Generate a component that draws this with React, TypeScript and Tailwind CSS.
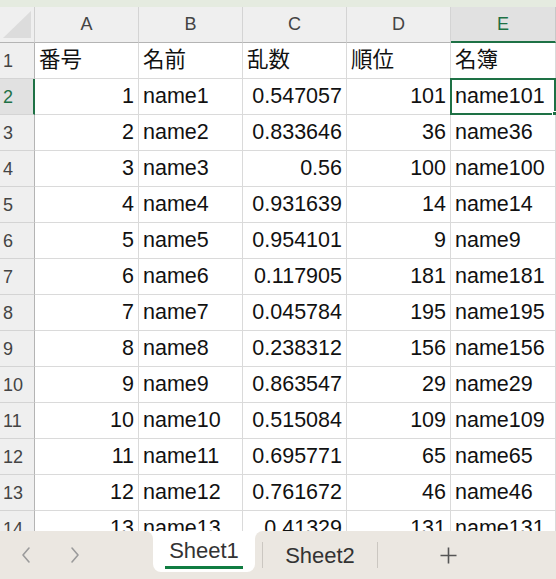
import { ReactNode } from "react";

type Row = {
  no: number;
  name: string;
  rand: string;
  rank: number;
  list: string;
};

const rows: Row[] = [
  { no: 1, name: "name1", rand: "0.547057", rank: 101, list: "name101" },
  { no: 2, name: "name2", rand: "0.833646", rank: 36, list: "name36" },
  { no: 3, name: "name3", rand: "0.56", rank: 100, list: "name100" },
  { no: 4, name: "name4", rand: "0.931639", rank: 14, list: "name14" },
  { no: 5, name: "name5", rand: "0.954101", rank: 9, list: "name9" },
  { no: 6, name: "name6", rand: "0.117905", rank: 181, list: "name181" },
  { no: 7, name: "name7", rand: "0.045784", rank: 195, list: "name195" },
  { no: 8, name: "name8", rand: "0.238312", rank: 156, list: "name156" },
  { no: 9, name: "name9", rand: "0.863547", rank: 29, list: "name29" },
  { no: 10, name: "name10", rand: "0.515084", rank: 109, list: "name109" },
  { no: 11, name: "name11", rand: "0.695771", rank: 65, list: "name65" },
  { no: 12, name: "name12", rand: "0.761672", rank: 46, list: "name46" },
  { no: 13, name: "name13", rand: "0.41329", rank: 131, list: "name131" },
];

const cols = ["A", "B", "C", "D", "E"];

const gridCols = "grid grid-cols-[35px_104px_104px_104px_104px_105px]";

const Cell = ({
  children,
  right,
  selected,
}: {
  children?: ReactNode;
  right?: boolean;
  selected?: boolean;
}) => (
  <div
    className={`relative flex h-[36px] items-center border-r border-b border-[#dadada] bg-white text-[21.5px] leading-none whitespace-nowrap text-[#111] ${
      right ? "justify-end pr-[4px]" : "pl-[4px]"
    }`}
  >
    {children}
    {selected && (
      <>
        <div className="absolute -top-px -left-px -right-px -bottom-px border-2 border-[#1e7145]" />
        <div className="absolute -right-[4px] -bottom-[4px] h-[7px] w-[7px] border border-white bg-[#1e7145]" />
      </>
    )}
  </div>
);

const RowHead = ({ n, active }: { n: number; active?: boolean }) => (
  <div
    className={`flex h-[36px] items-center border-b border-[#d4d4d4] pl-[3px] text-[18px] leading-none ${
      active
        ? "border-r-2 border-r-[#1e7145] bg-[#e1e1e1] text-[#1e7145]"
        : "border-r border-r-[#b4b4b4] bg-[#efefef] text-[#444]"
    }`}
  >
    {n}
  </div>
);

const Chevron = ({ dir }: { dir: "left" | "right" }) => (
  <svg width="12" height="18" viewBox="0 0 12 18" fill="none">
    <polyline
      points={dir === "left" ? "9,2 3,9 9,16" : "3,2 9,9 3,16"}
      stroke="#9b9b9b"
      strokeWidth="1.6"
      strokeLinecap="round"
      strokeLinejoin="round"
    />
  </svg>
);

export default function App() {
  return (
    <div
      className="flex h-[579px] w-[556px] flex-col overflow-hidden bg-white"
      style={{ fontFamily: '"Liberation Sans", "Noto Sans CJK JP", sans-serif' }}
    >
      <div className="h-[7px] shrink-0 bg-[#e5ebe0]" />

      <div className="flex-1 overflow-hidden">
        <div className={gridCols}>
          <div className="relative h-[36px] border-r border-b border-r-[#d0d0d0] border-b-[#b4b4b4] bg-[#efefef]">
            <svg className="absolute left-0 top-0" width="34" height="35" viewBox="0 0 34 35">
              <polygon points="3,31 31,31 31,4" fill="#dcdcdc" />
            </svg>
          </div>
          {cols.map((c) =>
            c === "E" ? (
              <div
                key={c}
                className="flex h-[36px] items-center justify-center border-r border-r-[#c8c8c8] border-b-2 border-b-[#1e7145] bg-[#e1e1e1] text-[18px] text-[#1e7145]"
              >
                {c}
              </div>
            ) : (
              <div
                key={c}
                className="flex h-[36px] items-center justify-center border-r border-b border-r-[#d4d4d4] border-b-[#b4b4b4] bg-[#efefef] text-[18px] text-[#444]"
              >
                {c}
              </div>
            )
          )}

          <RowHead n={1} />
          <Cell>番号</Cell>
          <Cell>名前</Cell>
          <Cell>乱数</Cell>
          <Cell>順位</Cell>
          <Cell>名簿</Cell>

          {rows.map((r, i) => (
            <div key={r.no} className="contents">
              <RowHead n={i + 2} active={i === 0} />
              <Cell right>{r.no}</Cell>
              <Cell>{r.name}</Cell>
              <Cell right>{r.rand}</Cell>
              <Cell right>{r.rank}</Cell>
              <Cell selected={i === 0}>{r.list}</Cell>
            </div>
          ))}
        </div>
      </div>

      <div className="flex h-[48px] shrink-0 bg-white">
        <div className="flex w-[153px] items-center gap-[37px] rounded-tr-[8px] bg-[#ebe7e1] pl-[20px]">
          <Chevron dir="left" />
          <Chevron dir="right" />
        </div>
        <div className="w-[102px] bg-[#ebe7e1]">
          <div className="relative flex h-[41px] items-center justify-center rounded-b-[8px] bg-white pb-[2px] text-[22px] text-[#333]">
            Sheet1
            <div className="absolute bottom-[3px] left-[12px] h-[3px] w-[78px] bg-[#107c41]" />
          </div>
        </div>
        <div className="flex flex-1 items-center rounded-tl-[8px] bg-[#ebe7e1] pl-[7px]">
          <div className="h-[26px] w-px bg-[#cbc7c1]" />
          <div className="w-[114px] text-center text-[22px] text-[#333]">Sheet2</div>
          <div className="h-[26px] w-px bg-[#cbc7c1]" />
          <svg className="ml-[62px]" width="17" height="17" viewBox="0 0 17 17">
            <path d="M8.5 0.5v16M0.5 8.5h16" stroke="#555" strokeWidth="1.6" />
          </svg>
        </div>
      </div>
    </div>
  );
}
